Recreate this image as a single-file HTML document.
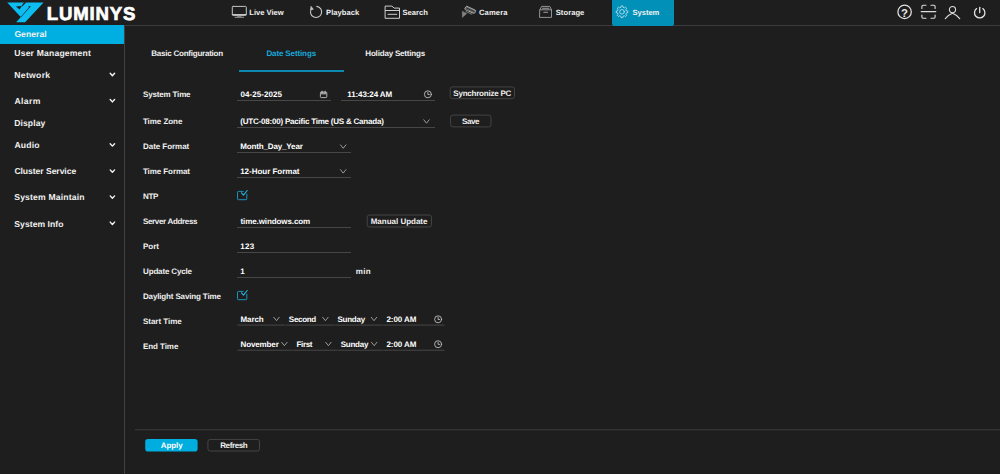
<!DOCTYPE html>
<html><head><meta charset="utf-8"><title>LUMINYS</title>
<style>
*{box-sizing:border-box;margin:0;padding:0}
html,body{width:1000px;height:474px;overflow:hidden;background:#1e1e1e;color:#fff;font-family:"Liberation Sans",sans-serif;font-size:8px}
.t{text-rendering:geometricPrecision;position:absolute;white-space:nowrap;font-weight:bold;font-family:"Liberation Sans",sans-serif}
.a{position:absolute}
.ul{position:absolute;height:1px;background:#474747}
.btn{position:absolute;border:1px solid #4d4d4d;border-radius:2.5px;background:#1e1e1e}
svg{position:absolute;overflow:visible}
</style></head><body>
<div class="a" style="left:0;top:25px;width:1000px;height:1px;background:#3c3c3c"></div>
<div class="a" style="left:124px;top:26px;width:1px;height:448px;background:#414141"></div>
<div class="a" style="left:0;top:25px;width:124px;height:19px;background:#00afe1"></div>
<div class="a" style="left:612px;top:0;width:62px;height:25.5px;background:#0090b8;border-radius:0 0 2.5px 2.5px"></div>
<!-- logo mark -->
<svg style="left:0;top:0" width="50" height="25" viewBox="0 0 50 25">
<path d="M7.2 2.4 H43.6 L25.1 22.2 H16.1 L21.1 16.7 L20.5 16.7 Z" fill="#0cbdf2"/>
<path d="M20.6 16.9 L21.2 16.9 L30.9 6.2 L28.3 6.2 L28.9 7.6 Z" fill="#1e1e1e"/>
<path d="M15.9 6.4 L21.7 6.0 L19.6 9.5 Z" fill="#1e1e1e"/>
<path d="M21.2 6.6 L24.0 2.2 L26.4 2.2 L22.2 6.4 Z" fill="#1e1e1e"/>
</svg>
<!-- tab underline -->
<div class="a" style="left:239px;top:70px;width:104.5px;height:2px;background:#0b89b0"></div>
<!-- field underlines -->
<div class="ul" style="left:237.4px;top:100px;width:93.2px"></div>
<div class="ul" style="left:341.4px;top:100px;width:93.2px"></div>
<div class="ul" style="left:237.4px;top:127px;width:197.2px"></div>
<div class="ul" style="left:237.4px;top:152px;width:114px"></div>
<div class="ul" style="left:237.4px;top:177px;width:114px"></div>
<div class="ul" style="left:237.4px;top:227px;width:114px"></div>
<div class="ul" style="left:237.4px;top:252px;width:114px"></div>
<div class="ul" style="left:237.4px;top:277px;width:114px"></div>
<svg style="left:0;top:0" width="1000" height="474"><rect x="237.4" y="324.6" width="47.8" height="1" fill="#484848"/><rect x="285.8" y="324.6" width="48.2" height="1" fill="#484848"/><rect x="334.6" y="324.6" width="48" height="1" fill="#484848"/><rect x="383.2" y="324.6" width="61.3" height="1" fill="#484848"/></svg>
<svg style="left:0;top:0" width="1000" height="474"><rect x="237.4" y="349.7" width="55" height="1" fill="#484848"/><rect x="293" y="349.7" width="44.6" height="1" fill="#484848"/><rect x="338.2" y="349.7" width="44.4" height="1" fill="#484848"/><rect x="383.2" y="349.7" width="61.3" height="1" fill="#484848"/></svg>
<!-- bottom line -->
<svg style="left:0;top:0" width="1000" height="474"><rect x="135" y="429.3" width="865" height="1" fill="#3d3d3d"/></svg>
<!-- buttons -->
<svg style="left:0;top:0" width="1000" height="474" viewBox="0 0 1000 474" fill="none" stroke="#444444" stroke-width="1">
<rect x="450.2" y="86.9" width="64.3" height="11.8" rx="2.3"/>
<rect x="450.6" y="115.1" width="40.4" height="11.8" rx="2.3"/>
<rect x="367.2" y="215" width="64.3" height="12" rx="2.3"/>
<rect x="145.2" y="438.9" width="52.4" height="12.6" rx="2.8" fill="#00addf" stroke="none"/>
<rect x="207.9" y="439.4" width="51.6" height="11.6" rx="2.3"/>
</svg>
<!-- nav icons -->
<svg style="left:0;top:0" width="1000" height="26" viewBox="0 0 1000 26" fill="none" stroke-linecap="round" stroke-linejoin="round">
<!-- monitor -->
<g stroke="#c4c4c4" stroke-width="1">
<rect x="232.3" y="6.4" width="14" height="9" rx="0.8"/>
<path d="M232.5 14.6 H246.1" stroke-width="1.3"/>
<path d="M235 17.3 H243.6 M237.5 16.2 H241" stroke-width="0.9" stroke="#a8a8a8"/>
</g>
<!-- playback -->
<g stroke="#c8c8c8" stroke-width="1.1">
<path d="M316.8 6.35 A5.6 5.6 0 1 1 311.7 8.4"/>
<path d="M311.2 6.6 L313.3 9.3 L310.9 9.6 Z" fill="#c8c8c8" stroke-width="0.7"/>
</g>
<!-- search folder -->
<g stroke="#cdcdcd" stroke-width="1">
<path d="M385.5 6.1 H391.9 L394.2 8.1 H399.5 V18.3 H385.5 Z"/>
<path d="M385.5 10.5 H399.5" stroke-width="1.2"/>
<path d="M388 14.3 H396.8"/>
</g>
<!-- camera -->
<g stroke="#a4a4a4" stroke-width="1">
<path d="M467.2 6.4 L475.4 10.2 Q476 10.8 475.5 11.6 L474.6 13 Q474 13.6 473.2 13.2 L465.2 9.6 Q464.4 9 465 8.2 L465.9 6.8 Q466.4 6 467.2 6.4 Z" fill="#707070"/>
<path d="M466.6 8 L474.2 11.5" stroke="#242424" stroke-width="0.9"/>
<path d="M465.8 9.2 L468.5 10.4" stroke="#3a3a3a" stroke-width="0.6"/>
<path d="M462.3 11.5 V17.6 L466.6 13.6 Z" fill="#858585" stroke="#858585" stroke-width="0.5"/>
<path d="M466 11.6 L471.8 14.2" stroke="#8a8a8a" stroke-width="0.9"/>
</g>
<!-- storage -->
<g stroke="#a0a0a0" stroke-width="0.9">
<path d="M539.9 9.8 L541.6 6.4 H549.8 L551.5 9.8 V17.4 H539.9 Z"/>
<path d="M539.9 9.8 H551.5"/>
<path d="M542.6 8.3 H548.8" stroke-width="1.1"/>
<path d="M543.8 12.2 H547.6" stroke-width="1.1"/>
</g>
<!-- gear -->
<g stroke="#d3edf5" stroke-width="0.75">
<circle cx="622" cy="11.8" r="2.3"/>
<path d="M626.47 10.73 L627.84 10.97 L627.84 12.63 L626.47 12.87 L625.92 14.20 L626.72 15.34 L625.54 16.52 L624.40 15.72 L623.07 16.27 L622.83 17.64 L621.17 17.64 L620.93 16.27 L619.60 15.72 L618.46 16.52 L617.28 15.34 L618.08 14.20 L617.53 12.87 L616.16 12.63 L616.16 10.97 L617.53 10.73 L618.08 9.40 L617.28 8.26 L618.46 7.08 L619.60 7.88 L620.93 7.33 L621.17 5.96 L622.83 5.96 L623.07 7.33 L624.40 7.88 L625.54 7.08 L626.72 8.26 L625.92 9.40 Z"/>
</g>
<!-- help -->
<g stroke="#e2e2e2" stroke-width="1.25">
<circle cx="904.6" cy="11.9" r="6.7"/>
</g>
<!-- scan -->
<g stroke="#dcdcdc" stroke-width="1.1">
<path d="M921.9 8.4 V6.4 Q921.9 5.2 923.1 5.2 H926"/>
<path d="M931 5.2 H933.9 Q935.1 5.2 935.1 6.4 V8.4"/>
<path d="M921.9 15 V17 Q921.9 18.2 923.1 18.2 H926"/>
<path d="M931 18.2 H933.9 Q935.1 18.2 935.1 17 V15"/>
<path d="M921.2 11.6 H935.8" stroke-width="1.2"/>
</g>
<!-- user -->
<g stroke="#dcdcdc" stroke-width="1.1">
<circle cx="952.5" cy="9.6" r="3.1"/>
<path d="M945.3 18.7 Q948.5 14.6 952.5 13.3 Q956.5 14.6 959.7 18.7"/>
</g>
<!-- power -->
<g stroke="#e2e2e2" stroke-width="1.3">
<path d="M976.6 8.6 A5.2 5.2 0 1 0 982.8 8.6"/>
<path d="M979.7 7.3 V12.6"/>
</g>
</svg>
<div class="t" style="left:900.6px;top:7.5px;font-size:11.4px;line-height:13px;color:#e8e8e8;width:8px;text-align:center">?</div>
<!-- sidebar chevrons -->
<svg style="left:0;top:0" width="126" height="474" viewBox="0 0 126 474" fill="none" stroke="#f4f4f4" stroke-width="1.4" stroke-linecap="round" stroke-linejoin="round">
<path d="M110.2 73.3 L112.4 75.7 L114.6 73.3"/>
<path d="M110.2 99.5 L112.4 101.9 L114.6 99.5"/>
<path d="M110.2 143.7 L112.4 146.1 L114.6 143.7"/>
<path d="M110.2 169.9 L112.4 172.3 L114.6 169.9"/>
<path d="M110.2 195.9 L112.4 198.3 L114.6 195.9"/>
<path d="M110.2 222.1 L112.4 224.5 L114.6 222.1"/>
</svg>
<!-- form icons -->
<svg style="left:0;top:0" width="1000" height="474" viewBox="0 0 1000 474" fill="none" stroke-linecap="round" stroke-linejoin="round">
<g stroke="#b0b0b0" stroke-width="0.85">
<path d="M423.8 119.8 L426.5 123.2 L429.2 119.8"/>
<path d="M340.5 144.9 L343.2 148.3 L345.9 144.9"/>
<path d="M340.5 169.7 L343.2 173.1 L345.9 169.7"/>
<path d="M273.8 317.3 L276.5 320.7 L279.2 317.3"/>
<path d="M322.7 317.3 L325.4 320.7 L328.1 317.3"/>
<path d="M371.3 317.3 L374.0 320.7 L376.7 317.3"/>
<path d="M281.7 342.3 L284.4 345.7 L287.1 342.3"/>
<path d="M325.7 342.3 L328.4 345.7 L331.1 342.3"/>
<path d="M371.5 342.3 L374.2 345.7 L376.9 342.3"/>
</g>
<g stroke="#c2c2c2" stroke-width="0.8">
<rect x="320.4" y="92.1" width="6.4" height="5.5" rx="0.9" stroke="#bdbdbd" stroke-width="0.9"/>
<rect x="320.4" y="92.1" width="6.4" height="2.3" fill="#9a9a9a" stroke="none"/>
<path d="M322.1 91.2 V92.6 M325.1 91.2 V92.6" stroke="#c4c4c4" stroke-width="1"/>
</g>
<g stroke="#cfcfcf" stroke-width="0.8">
<circle cx="427.9" cy="94.3" r="3.5"/>
<path d="M427.9 92.3 V94.5 H429.4"/>
<circle cx="438.1" cy="319.3" r="3.5"/>
<path d="M438.1 317.3 V319.5 H439.6"/>
<circle cx="438.1" cy="344.2" r="3.5"/>
<path d="M438.1 342.2 V344.4 H439.6"/>
</g>
<g stroke="#1a93bc" stroke-width="1">
<path d="M243.2 191.4 H238.3 Q237.5 191.4 237.5 192.2 V198.9 Q237.5 199.7 238.3 199.7 H246 Q246.8 199.7 246.8 198.9 V194.1"/>
<path d="M241.5 192.8 L243.5 195.1 L247.2 190.5" stroke="#27b3e3" stroke-width="1.1"/>
<path d="M243.2 291.4 H238.3 Q237.5 291.4 237.5 292.2 V298.9 Q237.5 299.7 238.3 299.7 H246 Q246.8 299.7 246.8 298.9 V294.1"/>
<path d="M241.5 292.8 L243.5 295.1 L247.2 290.5" stroke="#27b3e3" stroke-width="1.1"/>
</g>
</svg>

<div class="t" style="left:249.32px;top:7px;font-size:7.6px;line-height:11px;color:#f0f0f0;letter-spacing:-0.008px">Live View</div>
<div class="t" style="left:326.12px;top:7px;font-size:7.6px;line-height:11px;color:#f0f0f0;letter-spacing:0.021px">Playback</div>
<div class="t" style="left:402.52px;top:7px;font-size:7.6px;line-height:11px;color:#f0f0f0;letter-spacing:0.021px">Search</div>
<div class="t" style="left:478.94px;top:7px;font-size:7.6px;line-height:11px;color:#f0f0f0;letter-spacing:0.155px">Camera</div>
<div class="t" style="left:555.72px;top:7px;font-size:7.6px;line-height:11px;color:#f0f0f0;letter-spacing:0.059px">Storage</div>
<div class="t" style="left:632.52px;top:7px;font-size:7.6px;line-height:11px;color:#f0f0f0;letter-spacing:-0.035px">System</div>
<div class="t" style="left:46.83px;top:0px;font-size:18.6px;line-height:28px;-webkit-text-stroke:0.7px #ffffff;color:#ffffff;letter-spacing:0.819px">LUMINYS</div>
<div class="t" style="left:14.38px;top:28px;font-size:8.6px;line-height:13px;color:#f0f0f0;letter-spacing:0.063px">General</div>
<div class="t" style="left:14.32px;top:47px;font-size:8.6px;line-height:13px;color:#f0f0f0;letter-spacing:0.179px">User Management</div>
<div class="t" style="left:14.27px;top:69px;font-size:8.6px;line-height:13px;color:#f0f0f0;letter-spacing:0.328px">Network</div>
<div class="t" style="left:14.42px;top:95px;font-size:8.6px;line-height:13px;color:#f0f0f0;letter-spacing:0.437px">Alarm</div>
<div class="t" style="left:14.27px;top:117px;font-size:8.6px;line-height:13px;color:#f0f0f0;letter-spacing:0.071px">Display</div>
<div class="t" style="left:14.42px;top:139px;font-size:8.6px;line-height:13px;color:#f0f0f0;letter-spacing:0.187px">Audio</div>
<div class="t" style="left:14.38px;top:165px;font-size:8.6px;line-height:13px;color:#f0f0f0;letter-spacing:-0.053px">Cluster Service</div>
<div class="t" style="left:14.27px;top:191px;font-size:8.6px;line-height:13px;color:#f0f0f0;letter-spacing:0.168px">System Maintain</div>
<div class="t" style="left:14.27px;top:218px;font-size:8.6px;line-height:13px;color:#f0f0f0;letter-spacing:0.053px">System Info</div>
<div class="t" style="left:151.20px;top:48px;font-size:8px;line-height:12px;color:#f0f0f0;letter-spacing:-0.224px">Basic Configuration</div>
<div class="t" style="left:266.40px;top:48px;font-size:8px;line-height:12px;color:#16a9db;letter-spacing:-0.117px">Date Settings</div>
<div class="t" style="left:365.30px;top:48px;font-size:8px;line-height:12px;color:#f0f0f0;letter-spacing:-0.183px">Holiday Settings</div>
<div class="t" style="left:142.96px;top:89px;font-size:8px;line-height:12px;color:#f0f0f0;letter-spacing:-0.161px">System Time</div>
<div class="t" style="left:142.94px;top:116px;font-size:8px;line-height:12px;color:#f0f0f0;letter-spacing:-0.056px">Time Zone</div>
<div class="t" style="left:143.00px;top:141px;font-size:8px;line-height:12px;color:#f0f0f0;letter-spacing:-0.046px">Date Format</div>
<div class="t" style="left:142.94px;top:166px;font-size:8px;line-height:12px;color:#f0f0f0;letter-spacing:-0.078px">Time Format</div>
<div class="t" style="left:143.00px;top:191px;font-size:8px;line-height:12px;color:#f0f0f0;letter-spacing:-0.353px">NTP</div>
<div class="t" style="left:142.96px;top:216px;font-size:8px;line-height:12px;color:#f0f0f0;letter-spacing:-0.332px">Server Address</div>
<div class="t" style="left:143.00px;top:241px;font-size:8px;line-height:12px;color:#f0f0f0;letter-spacing:-0.010px">Port</div>
<div class="t" style="left:143.05px;top:266px;font-size:8px;line-height:12px;color:#f0f0f0;letter-spacing:-0.159px">Update Cycle</div>
<div class="t" style="left:143.00px;top:291px;font-size:8px;line-height:12px;color:#f0f0f0;letter-spacing:-0.153px">Daylight Saving Time</div>
<div class="t" style="left:142.96px;top:316px;font-size:8px;line-height:12px;color:#f0f0f0;letter-spacing:-0.030px">Start Time</div>
<div class="t" style="left:143.00px;top:341px;font-size:8px;line-height:12px;color:#f0f0f0;letter-spacing:-0.072px">End Time</div>
<div class="t" style="left:240.44px;top:89px;font-size:8px;line-height:12px;color:#ffffff;letter-spacing:0.066px">04-25-2025</div>
<div class="t" style="left:347.30px;top:89px;font-size:8px;line-height:12px;color:#ffffff;letter-spacing:-0.113px">11:43:24 AM</div>
<div class="t" style="left:240.37px;top:116px;font-size:8px;line-height:12px;color:#ffffff;letter-spacing:-0.216px">(UTC-08:00) Pacific Time (US &amp; Canada)</div>
<div class="t" style="left:240.30px;top:141px;font-size:8px;line-height:12px;color:#ffffff;letter-spacing:-0.151px">Month_Day_Year</div>
<div class="t" style="left:240.20px;top:166px;font-size:8px;line-height:12px;color:#ffffff;letter-spacing:-0.020px">12-Hour Format</div>
<div class="t" style="left:240.43px;top:216px;font-size:8px;line-height:12px;color:#ffffff;letter-spacing:-0.089px">time.windows.com</div>
<div class="t" style="left:240.20px;top:241px;font-size:8px;line-height:12px;color:#ffffff;letter-spacing:0.341px">123</div>
<div class="t" style="left:240.30px;top:266px;font-size:8px;line-height:12px;color:#ffffff;letter-spacing:-0.010px">1</div>
<div class="t" style="left:355.69px;top:266px;font-size:8px;line-height:12px;color:#f0f0f0;letter-spacing:0.388px">min</div>
<div class="t" style="left:240.50px;top:314px;font-size:8px;line-height:12px;color:#ffffff;letter-spacing:-0.104px">March</div>
<div class="t" style="left:288.86px;top:314px;font-size:8px;line-height:12px;color:#ffffff;letter-spacing:-0.312px">Second</div>
<div class="t" style="left:337.46px;top:314px;font-size:8px;line-height:12px;color:#ffffff;letter-spacing:-0.254px">Sunday</div>
<div class="t" style="left:386.40px;top:314px;font-size:8px;line-height:12px;color:#ffffff;letter-spacing:-0.047px">2:00 AM</div>
<div class="t" style="left:240.50px;top:339px;font-size:8px;line-height:12px;color:#ffffff;letter-spacing:-0.115px">November</div>
<div class="t" style="left:296.50px;top:339px;font-size:8px;line-height:12px;color:#ffffff;letter-spacing:-0.343px">First</div>
<div class="t" style="left:340.76px;top:339px;font-size:8px;line-height:12px;color:#ffffff;letter-spacing:-0.254px">Sunday</div>
<div class="t" style="left:386.40px;top:339px;font-size:8px;line-height:12px;color:#ffffff;letter-spacing:-0.047px">2:00 AM</div>
<div class="t" style="left:453.36px;top:88px;font-size:8px;line-height:12px;color:#f0f0f0;letter-spacing:-0.230px">Synchronize PC</div>
<div class="t" style="left:462.06px;top:116px;font-size:8px;line-height:12px;color:#f0f0f0;letter-spacing:-0.388px">Save</div>
<div class="t" style="left:370.70px;top:216px;font-size:8px;line-height:12px;color:#f0f0f0;letter-spacing:-0.009px">Manual Update</div>
<div class="t" style="left:160.82px;top:440px;font-size:8px;line-height:12px;color:#ffffff;letter-spacing:-0.084px">Apply</div>
<div class="t" style="left:220.20px;top:440px;font-size:8px;line-height:12px;color:#f0f0f0;letter-spacing:-0.372px">Refresh</div>
</body></html>
